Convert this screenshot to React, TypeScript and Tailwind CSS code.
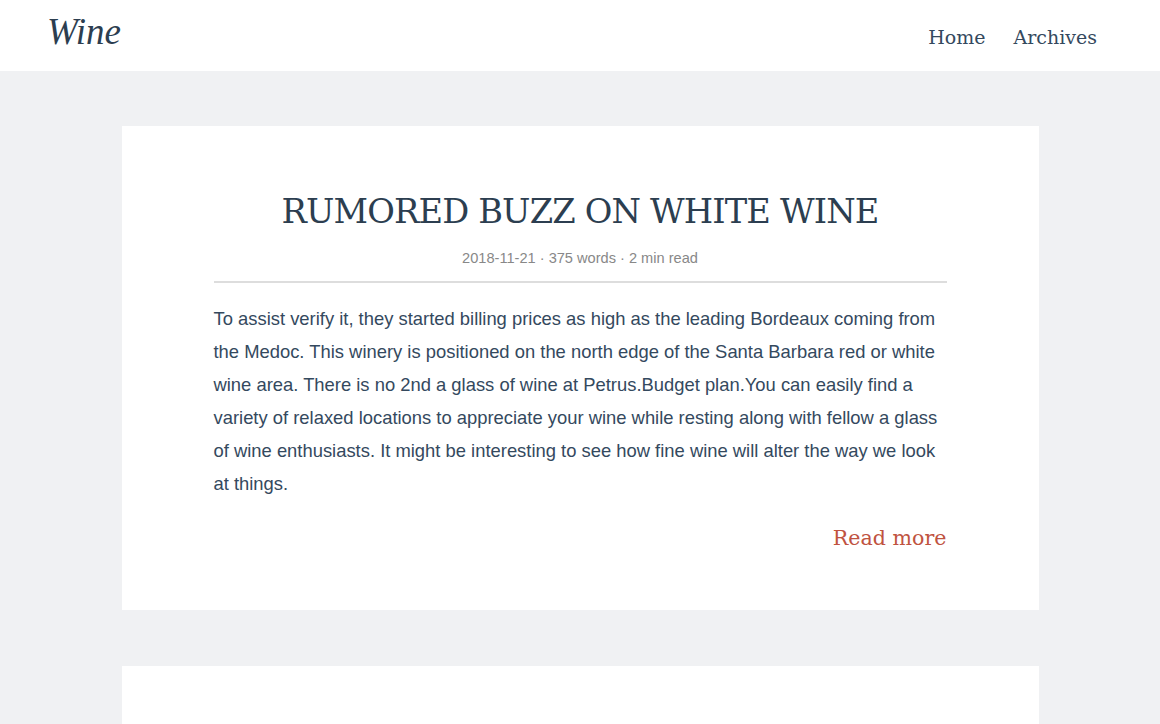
export default function App() {
  return (
    <div className="min-h-screen bg-[#f0f1f3]">
      <header className="h-[71px] bg-white flex items-start justify-between pl-[47px] pr-[63px]">
        <a href="#" className="pt-[10px] text-[37px] italic text-[#2c3e50] font-['Liberation_Serif',serif] leading-[44px]">
          Wine
        </a>
        <nav className="flex gap-[28px] pt-[23px] font-['DejaVu_Serif',serif] text-[19px] text-[#34495e]">
          <a href="#">Home</a>
          <a href="#">Archives</a>
        </nav>
      </header>
      <main className="w-[917px] mx-auto pt-[55px] flex flex-col gap-[56px]">
        <article className="bg-white px-[92px] pt-[62px] pb-[56px]">
          <h1 className="text-center text-[33.7px] leading-[48px] text-[#2c3e50] font-['DejaVu_Serif',serif] tracking-tight">
            RUMORED BUZZ ON WHITE WINE
          </h1>
          <div className="mt-[12px] text-center text-[14.6px] text-[#888] font-['Liberation_Sans',sans-serif] pb-[11px] border-b-2 border-[#ddd]">
            2018-11-21 · 375 words · 2 min read
          </div>
          <p className="mt-[19px] text-[18.4px] leading-[33px] text-[#34495e] font-['Liberation_Sans',sans-serif]">
            To assist verify it, they started billing prices as high as the leading Bordeaux coming from the Medoc. This winery is positioned on the north edge of the Santa Barbara red or white wine area. There is no 2nd a glass of wine at Petrus.Budget plan.You can easily find a variety of relaxed locations to appreciate your wine while resting along with fellow a glass of wine enthusiasts. It might be interesting to see how fine wine will alter the way we look at things.
          </p>
          <div className="mt-[23px] text-right">
            <a href="#" className="text-[20.6px] text-[#c0533f] font-['DejaVu_Serif',serif]">
              Read more
            </a>
          </div>
        </article>
        <article className="bg-white h-[300px]" />
      </main>
    </div>
  );
}
